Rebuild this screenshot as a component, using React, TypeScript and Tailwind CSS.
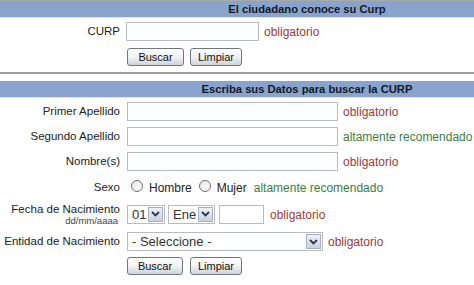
import React from 'react';

const font = { fontFamily: '"Liberation Sans", Arial, sans-serif' };

function Bar({ title }: { title: string }) {
  return (
    <div className="h-[17px] bg-[#88a4cc] border-b border-[#dfe7f2] pl-[140px] text-center text-[11.2px] font-bold leading-[16px] text-[#111827]">
      {title}
    </div>
  );
}

function Button({ label, w }: { label: string; w: string }) {
  return (
    <button className={`${w} h-[18px] rounded-[3px] border border-[#6f7680] bg-gradient-to-b from-white via-[#f1f2f4] to-[#cfd3da] text-[11px] leading-[14px] text-[#111]`}>
      {label}
    </button>
  );
}

function Input({ w }: { w: string }) {
  return <div className={`${w} h-[19px] border border-[#b7bcc4] bg-white`} />;
}

function Arrow() {
  return (
    <span className="flex h-[15px] w-[15px] items-center justify-center border border-[#a7b1c2] bg-gradient-to-b from-[#eef1f6] to-[#c9d1de]">
      <svg width="9" height="6" viewBox="0 0 9 6">
        <path d="M1 1 L4.5 4.5 L8 1" stroke="#2b3550" strokeWidth="1.8" fill="none" />
      </svg>
    </span>
  );
}

function Select({ w, text }: { w: string; text: string }) {
  return (
    <div className={`${w} h-[19px] flex items-center justify-between border border-[#b7bcc4] bg-white pl-[4px] pr-[1px] text-[13px] leading-none text-[#333]`}>
      <span>{text}</span>
      <Arrow />
    </div>
  );
}

function Radio() {
  return <span className="inline-block h-[12px] w-[12px] rounded-full border border-[#6b6f76] bg-gradient-to-br from-[#e8e8e8] to-white" />;
}

const req = <span className="text-[12px] text-[#9b3a3a]">obligatorio</span>;
const rec = <span className="text-[12px] text-[#3d7d3d]">altamente recomendado</span>;

function Label({ children }: { children: React.ReactNode }) {
  return <div className="whitespace-nowrap text-right text-[11.5px] text-[#222]">{children}</div>;
}

export default function App() {
  return (
    <div className="w-[474px] h-[285px] overflow-hidden bg-white" style={font}>
      <div className="h-px bg-[#a9a9a9]" />
      <Bar title="El ciudadano conoce su Curp" />

      <div className="mt-[4px] grid grid-cols-[120px_1fr] gap-x-[6px] items-center">
        <Label>CURP</Label>
        <div className="flex items-center gap-[5px]">
          <Input w="w-[133px]" />
          {req}
        </div>
        <div />
        <div className="mt-[7px] flex gap-[6px] pl-[1px]">
          <Button label="Buscar" w="w-[57px]" />
          <Button label="Limpiar" w="w-[52px]" />
        </div>
      </div>

      <div className="mt-[6px] h-[2px] bg-[#9c9c9c]" />
      <div className="h-[7px]" />
      <Bar title="Escriba sus Datos para buscar la CURP" />

      <div className="mt-[4px] grid grid-cols-[120px_1fr] gap-x-[7px] gap-y-[6px] items-center">
        <Label>Primer Apellido</Label>
        <div className="flex items-center gap-[5px]">
          <Input w="w-[211px]" />
          {req}
        </div>

        <Label>Segundo Apellido</Label>
        <div className="flex items-center gap-[5px]">
          <Input w="w-[211px]" />
          {rec}
        </div>

        <Label>Nombre(s)</Label>
        <div className="flex items-center gap-[5px]">
          <Input w="w-[211px]" />
          {req}
        </div>

        <div className="mt-[2px] text-right text-[11.5px] text-[#222]">Sexo</div>
        <div className="mt-[2px] flex h-[16px] items-center text-[12px] text-[#222]">
          <span className="ml-[4px]"><Radio /></span>
          <span className="ml-[6px]">Hombre</span>
          <span className="ml-[7px]"><Radio /></span>
          <span className="ml-[6px]">Mujer</span>
          <span className="ml-[7px]">{rec}</span>
        </div>

        <div className="whitespace-nowrap text-right text-[11.5px] leading-[12px] text-[#222]">
          Fecha de Nacimiento
          <div className="pr-[2px] text-[9.5px] leading-[11px] text-[#444]">dd/mm/aaaa</div>
        </div>
        <div className="flex items-center">
          <Select w="w-[38px]" text="01" />
          <span className="ml-[3px]"><Select w="w-[47px]" text="Ene" /></span>
          <span className="ml-[4px]"><Input w="w-[45px]" /></span>
          <span className="ml-[6px]">{req}</span>
        </div>

        <Label>Entidad de Nacimiento</Label>
        <div className="flex items-center gap-[5px]">
          <Select w="w-[196px]" text="- Seleccione -" />
          {req}
        </div>

        <div />
        <div className="flex gap-[7px]">
          <Button label="Buscar" w="w-[56px]" />
          <Button label="Limpiar" w="w-[52px]" />
        </div>
      </div>
    </div>
  );
}
